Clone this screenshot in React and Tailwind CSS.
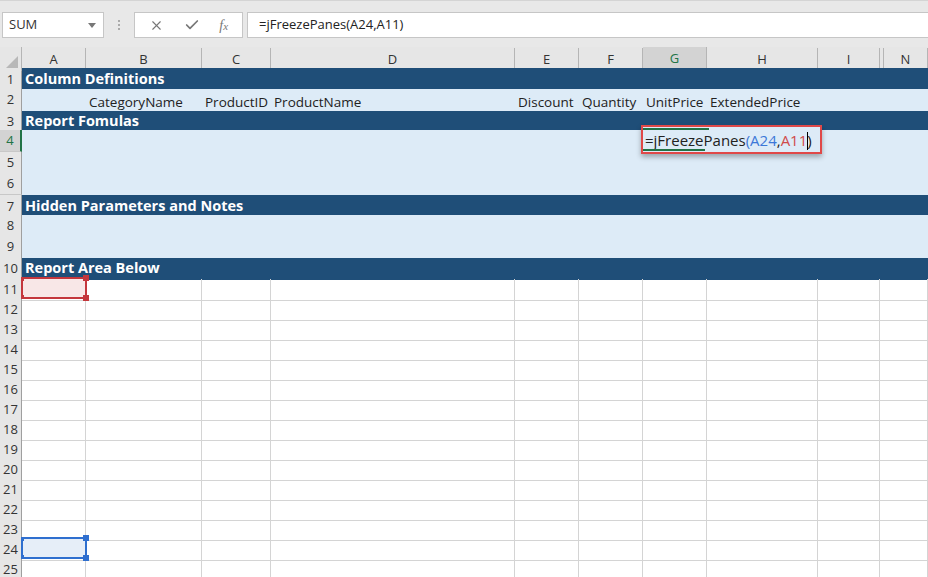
import { X, Check } from 'lucide-react'

const gridCols =
  'grid grid-cols-[22px_64px_116px_69px_244px_64px_64px_64px_111px_62px_4px_44px]'

const letters = ['A', 'B', 'C', 'D', 'E', 'F', 'G', 'H', 'I', '', 'N']

const upperRows = [
  { n: 1, h: 'h-[21px]', band: 'Column Definitions' },
  {
    n: 2,
    h: 'h-[21px]',
    cells: ['', 'CategoryName', 'ProductID', 'ProductName', 'Discount', 'Quantity', 'UnitPrice', 'ExtendedPrice', '', '', ''],
  },
  { n: 3, h: 'h-[20px]', band: 'Report Fomulas' },
  { n: 4, h: 'h-[22px]', active: true },
  { n: 5, h: 'h-[21px]' },
  { n: 6, h: 'h-[22px]' },
  { n: 7, h: 'h-[20px]', band: 'Hidden Parameters and Notes' },
  { n: 8, h: 'h-[21px]' },
  { n: 9, h: 'h-[21px]' },
  { n: 10, h: 'h-[22px]', band: 'Report Area Below' },
]

const lowerRows = Array.from({ length: 15 }, (_, i) => i + 11)

function RowHeader({ n, active }) {
  return (
    <div
      className={`flex items-center justify-center border-b border-[#c8c8c8] pt-[1px] text-[13px] ${
        active
          ? 'border-r-2 border-r-[#217346] bg-[#d3d3d3] text-[#217346]'
          : 'border-r border-r-[#9f9f9f] bg-[#e6e6e6] text-[#333]'
      }`}
    >
      {n}
    </div>
  )
}

function Handles({ color }) {
  return (
    <>
      <span className={`absolute -left-[2px] -top-[2px] h-[4px] w-[3px] ${color}`} />
      <span className={`absolute -right-[4px] -top-[4px] h-[6px] w-[6px] ${color}`} />
      <span className={`absolute -bottom-[2px] -left-[2px] h-[4px] w-[3px] ${color}`} />
      <span className={`absolute -bottom-[4px] -right-[4px] h-[6px] w-[6px] ${color}`} />
    </>
  )
}

function FormulaEditor() {
  return (
    <div className="absolute -left-[2px] -top-[5px] z-10 flex h-[29px] w-[181px] items-center whitespace-nowrap border-2 border-[#e04848] bg-[#ddebf7] pl-[2px] pt-[2px] text-[15px] shadow-[0_3px_5px_rgba(0,0,0,0.3)]">
      <span className="absolute left-0 top-[1px] h-[2px] w-[66px] bg-[#217346]" />
      <span className="absolute bottom-[1px] left-0 h-[2px] w-[62px] bg-[#217346]" />
      <span className="text-[#222]">=jFreezePanes</span>
      <span className="text-[#3c78d8]">(A24</span>
      <span className="text-[#222]">,</span>
      <span className="text-[#d04a4a]">A11</span>
      <span className="text-[#222]">)</span>
      <span className="ml-[-5px] h-[18px] w-[1px] bg-black" />
    </div>
  )
}

function UpperRow({ row }) {
  if (row.band) {
    return (
      <div className={`${gridCols} ${row.h}`}>
        <RowHeader n={row.n} />
        <div className="col-span-11 flex items-end bg-[#1f4e78] pb-[1px] pl-[3px] text-[14.5px] font-bold text-white">
          {row.band}
        </div>
      </div>
    )
  }
  return (
    <div className={`${gridCols} ${row.h}`}>
      <RowHeader n={row.n} active={row.active} />
      {letters.map((l, i) => (
        <div
          key={i}
          className="relative flex items-end whitespace-nowrap bg-[#ddebf7] pb-[1px] pl-[3px] text-[13.5px] leading-none text-[#222]"
        >
          {row.cells ? row.cells[i] : ''}
          {row.active && l === 'G' && <FormulaEditor />}
        </div>
      ))}
    </div>
  )
}

function LowerRow({ n }) {
  return (
    <div className={`${gridCols} h-[20px]`}>
      <RowHeader n={n} />
      {letters.map((l, i) => (
        <div
          key={i}
          className={`relative border-b border-[#d4d4d4] ${l === '' ? '' : 'border-r'}`}
        >
          {n === 11 && l === 'A' && (
            <div className="absolute -left-[1px] -top-[2px] z-10 h-[22px] w-[66px] border-2 border-[#c4373d] bg-[#f8e7e7]">
              <Handles color="bg-[#c4373d]" />
            </div>
          )}
          {n === 24 && l === 'A' && (
            <div className="absolute -left-[1px] -top-[2px] z-10 h-[22px] w-[66px] border-2 border-[#2f6fcf] bg-[#e6eef8]">
              <Handles color="bg-[#2f6fcf]" />
            </div>
          )}
        </div>
      ))}
    </div>
  )
}

export default function App() {
  return (
    <div className="h-[577px] w-[928px] overflow-hidden bg-white font-['Open_Sans','Noto_Sans',sans-serif]">
      <div className="h-[47px] border-t border-[#d4d4d4] bg-[#e8e8e8] pt-[11px]">
        <div className="flex h-[26px] items-stretch">
          <div className="ml-[2px] flex w-[102px] items-center justify-between border border-[#c6c6c6] bg-white pl-[6px] pr-[7px] text-[13px] text-[#333]">
            SUM
            <svg width="8" height="5" viewBox="0 0 8 5">
              <polygon points="0,0 8,0 4,5" fill="#777" />
            </svg>
          </div>
          <div className="flex w-[30px] flex-col items-center justify-center gap-[2px]">
            <span className="h-[2px] w-[2px] bg-[#aaa]" />
            <span className="h-[2px] w-[2px] bg-[#aaa]" />
            <span className="h-[2px] w-[2px] bg-[#aaa]" />
          </div>
          <div className="flex w-[109px] items-center justify-around border border-[#c6c6c6] bg-white px-[4px] text-[#777]">
            <X size={15} strokeWidth={1.8} />
            <Check size={16} strokeWidth={2.6} />
            <span className="font-['Liberation_Serif',serif] text-[14px] italic">
              f<span className="text-[11px]">x</span>
            </span>
          </div>
          <div className="ml-[4px] flex flex-1 items-center border-y border-l border-[#c6c6c6] bg-white pl-[11px] text-[13px] text-[#222]">
            =jFreezePanes(A24,A11)
          </div>
        </div>
      </div>

      <div className={`${gridCols} h-[21px] bg-[#e6e6e6]`}>
        <div className="relative border-r border-[#b5b5b5]">
          <svg className="absolute bottom-[3px] right-[3px]" width="12" height="12" viewBox="0 0 12 12">
            <polygon points="12,0 12,12 0,12" fill="#b8b8b8" />
          </svg>
        </div>
        {letters.map((l, i) =>
          l === 'G' ? (
            <div
              key={i}
              className="flex items-center justify-center border-b-2 border-r border-b-[#217346] border-r-[#b5b5b5] bg-[#d3d3d3] pt-[2px] text-[13px] text-[#217346]"
            >
              {l}
            </div>
          ) : (
            <div
              key={i}
              className="my-[1px] flex items-center justify-center border-r border-[#b5b5b5] pt-[1px] text-[13px] text-[#333]"
            >
              {l}
            </div>
          )
        )}
      </div>

      {upperRows.map((row) => (
        <UpperRow key={row.n} row={row} />
      ))}
      {lowerRows.map((n) => (
        <LowerRow key={n} n={n} />
      ))}
    </div>
  )
}
